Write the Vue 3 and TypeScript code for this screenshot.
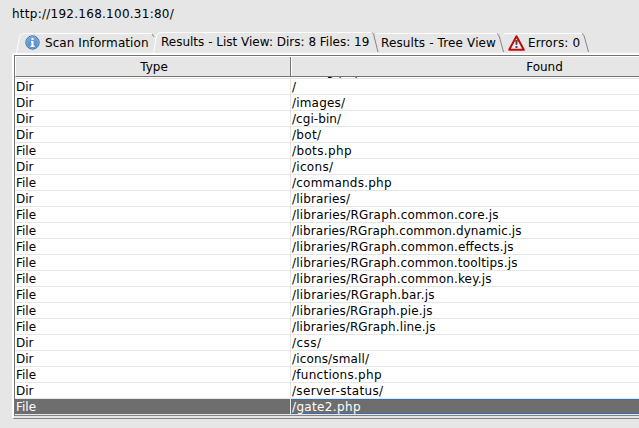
<script setup lang="ts">
interface Row { type: string; found: string; w: number }
const rows: Row[] = [
  { type: 'File', found: '/config.php', w: 70 },
  { type: 'Dir', found: '/', w: 4 },
  { type: 'Dir', found: '/images/', w: 53 },
  { type: 'Dir', found: '/cgi-bin/', w: 49 },
  { type: 'Dir', found: '/bot/', w: 29 },
  { type: 'File', found: '/bots.php', w: 59.5 },
  { type: 'Dir', found: '/icons/', w: 41 },
  { type: 'File', found: '/commands.php', w: 99.5 },
  { type: 'Dir', found: '/libraries/', w: 58 },
  { type: 'File', found: '/libraries/RGraph.common.core.js', w: 206.5 },
  { type: 'File', found: '/libraries/RGraph.common.dynamic.js', w: 229.5 },
  { type: 'File', found: '/libraries/RGraph.common.effects.js', w: 221.5 },
  { type: 'File', found: '/libraries/RGraph.common.tooltips.js', w: 225.5 },
  { type: 'File', found: '/libraries/RGraph.common.key.js', w: 199.5 },
  { type: 'File', found: '/libraries/RGraph.bar.js', w: 142.5 },
  { type: 'File', found: '/libraries/RGraph.pie.js', w: 140.5 },
  { type: 'File', found: '/libraries/RGraph.line.js', w: 143.5 },
  { type: 'Dir', found: '/css/', w: 29 },
  { type: 'Dir', found: '/icons/small/', w: 77 },
  { type: 'File', found: '/functions.php', w: 89.5 },
  { type: 'Dir', found: '/server-status/', w: 91 },
  { type: 'File', found: '/gate2.php', w: 68.5 },
]
</script>

<template>
  <main class="app">
    <div class="url">http://192.168.100.31:80/</div>
    <nav class="tabs">
      <div class="tab info">
        <svg class="edge" width="140" height="21" viewBox="0 0 140 21"><path d="M.5 20C2 15 2 8 4 3Q5 .5 8 .5H136" stroke="#fff" fill="none" /></svg>
        <svg class="icon" width="15" height="15" viewBox="0 0 15 15"><defs><linearGradient id="blue" x2="0" y2="1"><stop stop-color="#78a7dc" /><stop offset="1" stop-color="#4f87c7" /></linearGradient></defs><circle cx="7.5" cy="7.5" r="6.7" fill="url(#blue)" stroke="#3e70aa" /><circle cx="7.5" cy="7.5" r="5.8" fill="none" stroke="#8ab4e2" stroke-width=".7" /><path d="M6.5 3h2v2h-2zM6 6h2.5v4.5H9.5V12H5.5v-1.5h1v-3H6z" fill="#fff" /></svg>
        <span>Scan Information</span>
      </div>
      <div class="tab list">
        <svg class="edge" width="226" height="22" viewBox="0 0 226 22"><path d="M.5 21C2 16 2 8 4 3Q5 .5 8 .5H219" stroke="#fff" fill="none" /><path d="M-1 2l2 3M219 .5Q221 1 221.5 6L225 20" stroke="#858585" fill="none" /></svg>
        <span>Results - List View: Dirs: 8 Files: 19</span>
      </div>
      <div class="tab tree">
        <svg class="edge" width="129" height="21" viewBox="0 0 129 21"><path d="M0 .5H121" stroke="#fff" /><path d="M121 .5Q123 1 124 6L127.5 19" stroke="#858585" fill="none" /></svg>
        <span>Results - Tree View</span>
      </div>
      <div class="tab errors">
        <svg class="edge" width="87" height="21" viewBox="0 0 87 21"><path d="M0 3Q1 .5 3 .5H79" stroke="#fff" fill="none" /><path d="M79 .5Q81 1 82 6L85.5 19" stroke="#858585" fill="none" /></svg>
        <svg class="icon" width="17" height="16" viewBox="0 0 17 16"><path d="M8.5 1.2L15.8 14.8H1.2z" fill="#eee" stroke="#c00b0b" stroke-width="2" stroke-linejoin="round" /><path d="M7.2 5h2.6L9.2 10H7.8zM7.5 11h2v2h-2z" fill="#444b55" /></svg>
        <span>Errors: 0</span>
      </div>
    </nav>
    <section class="panel">
      <div class="table">
        <header class="head"><div class="typehead">Type</div><div class="foundhead"><span>Found</span></div></header>
        <div class="viewport">
          <div v-for="(row, i) in rows" :key="row.found" class="row" :class="{ selected: i === rows.length - 1 }">
            <div class="type">{{ row.type }}</div>
            <div class="found"><svg :width="row.w + 4" height="15"><text x="1" y="12" :textLength="row.w">{{ row.found }}</text></svg></div>
          </div>
        </div>
      </div>
    </section>
  </main>
</template>

<style>
body { overflow: hidden; }
</style>
<style scoped>
.app { width: 639px; height: 428px; overflow: hidden; background: #e6e6e6; color: #000; font: 12px/15px "DejaVu Sans", sans-serif; display: flex; flex-direction: column; }
.url { height: 33px; padding: 7px 0 0 12px; box-sizing: border-box; flex: none; white-space: nowrap; letter-spacing: .26px; }
.tabs { height: 20px; flex: none; display: flex; padding-left: 16px; }
.tab { position: relative; box-sizing: border-box; height: 20px; display: flex; white-space: nowrap; padding-top: 3px; flex: none; }
.tab span { position: relative; }
.edge { position: absolute; left: 0; top: 0; overflow: visible; }
.info { width: 137px; padding-left: 9px; letter-spacing: .07px; }
.info .icon { margin: -1px 5px 0 0; }
.list { width: 223px; padding: 2px 0 0 8px; }
.list .edge { top: -1px; }
.tree { width: 127px; padding-left: 5px; letter-spacing: .13px; }
.errors { width: 90px; padding-left: 5px; letter-spacing: .13px; }
.errors .icon { margin: -1px 3px 0 0; }
.panel { margin-left: 12px; height: 366px; flex: none; box-sizing: border-box; border-left: 2px solid #fff; border-top: 2px solid #fff; border-bottom: 1px solid #858585; }
.table { height: 361px; box-sizing: border-box; border-left: 1px solid #757575; border-top: 1px solid #757575; border-bottom: 1px solid #858585; }
.head { height: 21px; box-sizing: border-box; border-top: 1px solid #fff; border-left: 1px solid #fff; border-bottom: 1px solid #757575; display: flex; text-align: center; line-height: 20px; }
.typehead { width: 275px; box-sizing: border-box; border-right: 1px solid #757575; padding-left: 2px; flex: none; }
.foundhead { width: 506px; box-sizing: border-box; border-left: 1px solid #fff; flex: none; }
.viewport { height: 338px; background: #fff; overflow: hidden; display: flex; flex-direction: column; justify-content: flex-end; }
.row { height: 16px; box-sizing: border-box; border-bottom: 1px solid #e6e6e6; display: flex; flex: none; line-height: 15px; }
.type { width: 276px; padding: 1px 0 0 1px; box-sizing: border-box; border-right: 1px solid #e6e6e6; flex: none; }
.found { flex: 1; height: 15px; box-sizing: border-box; }
.found svg { display: block; fill: currentColor; }
.selected { background: #6e6e6e; color: #fff; }
.selected .found { border: 1px solid #3470b5; border-right: 0; }
.selected .found svg { margin: -1px 0 0 -1px; }
</style>
